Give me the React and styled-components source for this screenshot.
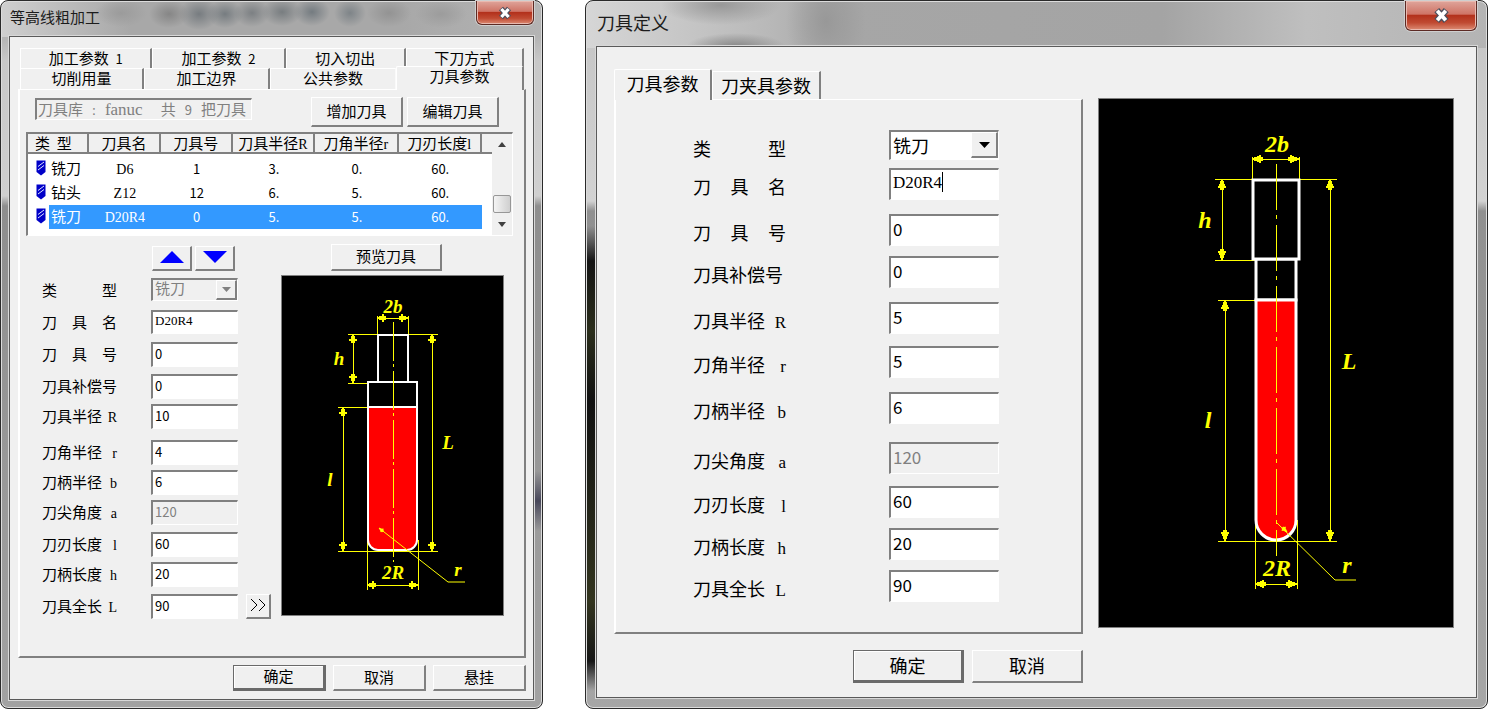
import React, { useState } from "react";
import styled, { createGlobalStyle, css } from "styled-components";

const GlobalStyle = createGlobalStyle`
  * {
    box-sizing: border-box;
  }
  body {
    margin: 0;
    background: #fff;
    color: #000;
    font-family: "Noto Sans CJK SC", sans-serif;
  }
  button, input, select {
    font-family: inherit;
    color: inherit;
    margin: 0;
  }
`;

const raised = css`
  border-style: solid;
  border-width: 1px 2px 2px 1px;
  border-color: #fff #808080 #808080 #fff;
`;

const sunken = css`
  border-style: solid;
  border-width: 2px 1px 1px 2px;
  border-color: #808080 #fff #fff #808080;
`;

const Desktop = styled.main`
  display: grid;
  grid-template-columns: 543fr 903fr;
  gap: 42px;
  min-height: 100vh;
`;

const grayFrame = css`
  background:
    radial-gradient(ellipse 26px 14px at 120px 12px, #9b9b9b, transparent),
    radial-gradient(ellipse 20px 14px at 168px 13px, #868686, transparent),
    radial-gradient(ellipse 20px 16px at 198px 13px, #777c80, transparent),
    radial-gradient(ellipse 18px 14px at 224px 13px, #767c80, transparent),
    radial-gradient(ellipse 18px 14px at 251px 12px, #7c8083, transparent),
    radial-gradient(ellipse 20px 14px at 281px 11px, #787d80, transparent),
    radial-gradient(ellipse 18px 14px at 311px 11px, #747b80, transparent),
    radial-gradient(ellipse 16px 14px at 349px 12px, #7e8488, transparent),
    radial-gradient(ellipse 22px 14px at 388px 12px, #939393, transparent),
    radial-gradient(ellipse 26px 14px at 440px 13px, #9c9c9c, transparent),
    linear-gradient(180deg, transparent 470px, #47475a 500px, transparent 530px) right / 9px 100% no-repeat,
    linear-gradient(90deg, #cfcfcf, #a8a8a8 130px, #a8a8a8 400px, #b4b4b4) top / 100% 36px no-repeat,
    linear-gradient(180deg, #c4c4c4 0, #b4b4b4 36px, #c8c8c8 60px, #cfcfcf 195px, #8e8e8e 205px, #a2a2a2 100%);
`;

const darkFrame = css`
  background:
    linear-gradient(180deg, transparent 225px, #141414 260px, #2b2e1c 330px, #111 400px, #33351f 600px, #161616 660px, transparent 690px) left / 11px 100% no-repeat,
    radial-gradient(ellipse 50px 14px at 150px 46px, #858585, transparent),
    radial-gradient(ellipse 60px 20px at 135px 4px, #989898, transparent),
    radial-gradient(ellipse 40px 60px at 240px 20px, #989898, transparent),
    linear-gradient(90deg, #d6d6d6, #b9b9b9 180px, #a6a6a6 260px, #a4a4a4 64%, #bfbfbf 80%, #b4b4b4) top / 100% 47px no-repeat,
    linear-gradient(180deg, #c4c4c4 0, #d2d2d2 200px, #909090 210px, #a6a6a6 100%);
`;

const Window = styled.section`
  display: flex;
  flex-direction: column;
  min-width: 0;
  padding: 0 ${(p) => (p.$large ? "10px 10px" : "8px 8px")};
  border: 1px solid #2a2a2a;
  border-radius: 8px;
  box-shadow: inset 0 0 0 1px #dcdcdc;
  font-size: ${(p) => (p.$large ? 18 : 15)}px;
  line-height: ${(p) => (p.$large ? 24 : 20)}px;
  ${(p) => (p.$large ? darkFrame : grayFrame)}
`;

const TitleBar = styled.header`
  display: flex;
  justify-content: space-between;
  align-items: flex-start;
  height: ${(p) => (p.$large ? 45 : 35)}px;
`;

const Title = styled.h1`
  margin: 0;
  padding-top: ${(p) => (p.$large ? 9 : 6)}px;
  padding-left: 1px;
  font-size: inherit;
  line-height: inherit;
  font-weight: 400;
  color: #1c1c1c;
`;

const CloseButton = styled.button`
  display: flex;
  align-items: center;
  justify-content: center;
  width: ${(p) => (p.$large ? 72 : 58)}px;
  height: ${(p) => (p.$large ? 30 : 24)}px;
  padding: 0;
  border: 1px solid #5c2a24;
  border-top: 0;
  border-radius: 0 0 6px 6px;
  background: linear-gradient(180deg, #dfa59b 0, #cf7466 45%, #b3311c 50%, #c04a32 75%, #dd8c74 100%);
  box-shadow: inset 0 0 0 1px #e9b9af, 0 0 0 1px #cfcfcf;
`;

const Client = styled.div`
  flex: 1;
  display: flex;
  flex-direction: column;
  padding: 11px 7px 7px 8px;
  border: 1px solid #5a5a5a;
  background: #f0f0f0;
  box-shadow: 0 0 0 1px #d8d8d8;
`;

const TabRow = styled.div`
  display: grid;
  grid-template-columns: ${(p) => p.$columns};
  height: ${(p) => p.$height}px;
  padding: 0 ${(p) => (p.$large ? 0 : 2)}px;
  line-height: ${(p) => (p.$large ? 24 : 18)}px;
`;

const Tab = styled.button`
  padding: 0 0 2px;
  border: 0;
  border-top: 1px solid #fff;
  border-left: 1px solid #fff;
  border-right: ${(p) => (p.$edge ? "2px solid #808080" : "1px solid #fafafa")};
  background: #f0f0f0;
  font-size: inherit;
  line-height: inherit;
  ${(p) =>
    p.$active &&
    css`
      z-index: 1;
      margin-top: -2px;
      margin-bottom: -1px;
      padding-bottom: 5px;
      border-radius: 2px 2px 0 0;
    `}
`;

const Panel = styled.div`
  border-style: solid;
  border-width: 1px 2px 2px;
  border-color: #fff #808080 #808080 #fff;
`;

const PushButton = styled.button`
  ${raised}
  display: flex;
  align-items: center;
  justify-content: center;
  width: ${(p) => p.$width}px;
  height: ${(p) => p.$height}px;
  padding: 0 0 2px;
  background: #f0f0f0;
  font-size: inherit;
  line-height: inherit;
  ${(p) =>
    p.$default &&
    css`
      border-width: 1px 3px 3px 1px;
      border-color: #6a6a6a;
      box-shadow: inset 1px 1px 0 #fff;
    `}
`;

const Toolbar = styled.div`
  display: flex;
  justify-content: space-between;
  align-items: flex-start;
  padding: 7px 25px 0 15px;
`;

const ButtonPair = styled.div`
  display: flex;
  gap: 4px;
`;

const LibraryInfo = styled.output`
  ${sunken}
  display: flex;
  align-items: baseline;
  gap: 9px;
  width: 217px;
  height: 22px;
  margin-top: 1px;
  padding-left: 1px;
  color: #808080;
  line-height: 18px;
  white-space: nowrap;
`;

const Latin = styled.span`
  font-family: "Liberation Serif", serif;
  font-size: ${(p) => (p.$large ? 17 : 14)}px;
  line-height: 0;
`;

const Digits = styled.span`
  font-size: 13px;
  line-height: 0;
`;

const ListView = styled.div`
  display: flex;
  justify-content: space-between;
  margin: 5px 11px 0 6px;
  ${sunken}
  background: #fff;
`;

const ToolTable = styled.table`
  flex: 1;
  table-layout: fixed;
  border-collapse: separate;
  border-spacing: 0;
  margin-bottom: 6px;
  tbody::before {
    content: "";
    display: block;
    height: 3px;
  }
`;

const HeadCell = styled.th`
  width: ${(p) => p.$width}px;
  height: 20px;
  padding: 0;
  border-right: 2px solid #808080;
  border-bottom: 2px solid #808080;
  background: #f0f0f0;
  font-weight: 400;
  line-height: 18px;
  white-space: nowrap;
`;

const TypeHeadCell = styled(HeadCell)`
  padding-left: 7px;
  text-align: left;
`;

const TailCell = styled(HeadCell)`
  border-right: 0;
`;

const Cell = styled.td`
  height: 24px;
  padding: 0 0 2px;
  text-align: center;
  line-height: 18px;
`;

const TypeCell = styled(Cell)`
  padding-left: 2px;
  text-align: left;
`;

const ToolRow = styled.tr`
  ${(p) =>
    p.$selected &&
    css`
      color: #fff;
      ${Cell}, ${TypeCell} {
        background: #3399ff;
      }
    `}
`;

const IconCell = styled.td`
  padding: 0 0 2px 8px;
  line-height: 0;
`;

const ScrollBar = styled.div`
  display: flex;
  flex-direction: column;
  justify-content: flex-end;
  align-items: center;
  width: 20px;
  padding: 8px 0;
  background: #f0f0f0;
`;

const ScrollThumb = styled.div`
  width: 18px;
  height: 18px;
  margin: auto 0 9px;
  border: 1px solid #979797;
  border-radius: 2px;
  background: linear-gradient(90deg, #f4f4f4, #cfcfcf);
`;

const PanelBody = styled.div`
  display: grid;
  grid-template-columns: 261px 1fr;
  padding: 8px 20px 38px 0;
`;

const MoveButtons = styled.div`
  display: flex;
  gap: 3px;
  padding: 2px 0 7px 132px;
`;

const PreviewColumn = styled.div`
  display: flex;
  flex-direction: column;
  gap: 4px;
`;

const PreviewHeader = styled.div`
  padding-left: 50px;
`;

const Form = styled.form`
  display: flex;
  flex-direction: column;
  padding: ${(p) => (p.$large ? "30px 0 30px 77px" : "0 0 0 22px")};
`;

const FieldRow = styled.div`
  display: grid;
  grid-template-columns: ${(p) => (p.$large ? "196px 110px" : "109px 95px 25px")};
  height: ${(p) => (p.$large ? 32 : 24)}px;
  margin-top: ${(p) => p.$gap}px;
`;

const FieldLabel = styled.label`
  display: flex;
  justify-content: space-between;
  align-items: baseline;
  width: ${(p) => (p.$large ? 93 : 75)}px;
  padding-top: ${(p) => (p.$large ? 6 : 2)}px;
  white-space: nowrap;
`;

const FieldSlot = styled.div`
  display: grid;
  width: ${(p) => (p.$large ? 110 : 87)}px;
  > * {
    grid-area: 1 / 1;
  }
`;

const TextBox = styled.input`
  ${sunken}
  width: 100%;
  height: 100%;
  padding: 0 2px ${(p) => (p.$large ? 4 : 3)}px;
  background: #fff;
  border-radius: 0;
  outline: 0;
  font-size: ${(p) => (p.$large ? 17 : 13)}px;
  ${(p) =>
    p.$code &&
    css`
      font-family: "Liberation Serif", serif;
    `}
  &:disabled {
    background: #f0f0f0;
    color: #808080;
  }
`;

const Caret = styled.span`
  width: 1px;
  height: 20px;
  margin: 4px 0 0 53px;
  background: #000;
`;

const Select = styled.select`
  ${sunken}
  appearance: none;
  width: 100%;
  height: ${(p) => (p.$large ? 30 : 23)}px;
  padding: 0 0 ${(p) => (p.$large ? 2 : 4)}px 2px;
  border-radius: 0;
  background: #fff;
  outline: 0;
  font-size: ${(p) => (p.$large ? 18 : 15)}px;
  line-height: ${(p) => (p.$large ? 24 : 16)}px;
  &:disabled {
    background: #f0f0f0;
    color: #808080;
    opacity: 1;
  }
`;

const SelectArrow = styled.span`
  ${raised}
  display: flex;
  align-items: center;
  justify-content: center;
  justify-self: end;
  width: ${(p) => (p.$large ? 27 : 21)}px;
  height: ${(p) => (p.$large ? 26 : 20)}px;
  margin: 2px 1px 0 0;
  background: #f0f0f0;
  pointer-events: none;
`;

const DialogButtons = styled.footer`
  display: flex;
  justify-content: flex-end;
  gap: ${(p) => (p.$large ? 8 : 7)}px;
  padding-top: ${(p) => (p.$large ? 16 : 7)}px;
`;

const DefinitionLayout = styled.div`
  flex: 1;
  display: grid;
  grid-template-columns: 469fr 356fr;
  column-gap: 15px;
  padding: 13px 15px 7px 9px;
`;

const DrawingSlot = styled.div`
  padding-top: 27px;
`;

const Drawing = styled.svg`
  display: block;
  width: 100%;
  height: auto;
  border: 1px solid #808080;
  background: #000;
`;

const CloseIcon = ({ size }) => (
  <svg width={size} height={size} viewBox="0 0 16 16">
    <path d="M4 3.5 12 12.5M12 3.5 4 12.5" stroke="#4a4f5c" strokeWidth="5.4" />
    <path d="M4.4 4 11.6 12M11.6 4 4.4 12" stroke="#fff" strokeWidth="3.2" />
  </svg>
);

const Triangle = ({ width, height, color, up }) => (
  <svg width={width} height={height} viewBox="0 0 10 10" preserveAspectRatio="none">
    <path d={up ? "M0 10 5 0 10 10z" : "M0 0H10L5 10z"} fill={color} />
  </svg>
);

const ToolIcon = () => (
  <svg width="10" height="16" viewBox="0 0 10 16">
    <path d="M.5.5H9.500V12L5 15.500 .5 12z" fill="#0000c8" />
    <path d="M2 6.500 8 2M2 10 8 5.500" stroke="#dfe6ff" strokeWidth="1" />
  </svg>
);

const YELLOW = "#ffff00";

const ArrowHead = ({ x, y, angle, size }) => (
  <g transform={`translate(${x} ${y}) rotate(${angle}) scale(${size})`} fill={YELLOW}>
    <path d="M0 -.8 8 -3.500V3.500L0 .8z" />
    <path d="M6 -4H8V-2H10V2H8V4H6z" />
  </g>
);

const Dimension = ({ x1, y1, x2, y2, size }) => {
  const vertical = x1 === x2;
  return (
    <g>
      <line x1={x1} y1={y1} x2={x2} y2={y2} stroke={YELLOW} />
      <ArrowHead x={x1} y={y1} angle={vertical ? 90 : 0} size={size} />
      <ArrowHead x={x2} y={y2} angle={vertical ? 270 : 180} size={size} />
    </g>
  );
};

const smallTool = {
  view: "1 1 221 339",
  center: 112,
  axis: [47, 287, "39 3 3 4"],
  shank: [97, 127, 60, 107],
  body: [87, 136, 107, 132, 275],
  radius: 10,
  top: 59,
  bottom: 276,
  left: 57,
  hLeft: 67,
  right: 157,
  lX: 62,
  hX: 72,
  LX: 151,
  topDim: 43,
  bottomDim: 310,
  leader: "M98 253 167 307H184",
  tip: [98, 253, 38],
  font: 19,
  arrow: 0.9,
  stroke: 2,
  labels: [
    ["2b", 112, 38],
    ["h", 58, 90],
    ["L", 167, 174],
    ["l", 49, 211],
    ["2R", 112, 304],
    ["r", 177, 301],
  ],
};

const largeTool = {
  view: "1 1 354 528",
  center: 178,
  axis: [66, 458, "46 5 4 6"],
  shank: [155, 201, 82, 161],
  body: [158, 198, 161, 202, 442],
  radius: 20,
  top: 81,
  bottom: 443,
  left: 120,
  hLeft: 117,
  right: 239,
  lX: 127,
  hX: 124,
  LX: 232,
  topDim: 61,
  bottomDim: 486,
  leader: "M178 424 237 482H258",
  tip: [189, 434, 225],
  font: 24,
  arrow: 1.1,
  stroke: 3,
  labels: [
    ["2b", 179, 54],
    ["h", 107, 130],
    ["L", 251, 271],
    ["l", 110, 330],
    ["2R", 179, 478],
    ["r", 249, 475],
  ],
};

const ToolDrawing = ({ tool, title }) => {
  const [sx1, sx2, sy1, sy2] = tool.shank;
  const [bx1, bx2, by1, edge, by2] = tool.body;
  const r = tool.radius;
  const cutter = `M${bx1} ${edge}V${by2 - r}A${r} ${r} 0 0 0 ${bx1 + r} ${by2}H${bx2 - r}A${r} ${r} 0 0 0 ${bx2} ${by2 - r}V${edge}z`;
  return (
    <Drawing viewBox={tool.view} role="img" aria-label={title}>
      <g fill="none" stroke={YELLOW} shapeRendering="crispEdges">
        <path d={`M${tool.hLeft} ${tool.top}H${tool.right}`} />
        <path d={`M${tool.hLeft} ${by1 + 1}H${bx1}`} />
        <path d={`M${tool.left} ${edge}H${bx1}`} />
        <path d={`M${tool.left} ${tool.bottom}H${tool.right}`} />
        <path d={`M${sx1 - 1} ${tool.topDim - 2}V${tool.top}M${sx2} ${tool.topDim - 2}V${tool.top}`} />
        <path d={`M${bx1 - 1} ${by2 - r}V${tool.bottomDim + 5}M${bx2 + 1} ${by2 - r}V${tool.bottomDim + 5}`} />
      </g>
      <g stroke="#fff" strokeWidth={tool.stroke}>
        <rect x={bx1} y={by1} width={bx2 - bx1} height={edge - by1} fill="none" />
        <rect x={sx1} y={sy1} width={sx2 - sx1} height={sy2 - sy1} fill="#000" />
        <path d={cutter} fill="#ff0000" />
      </g>
      <path
        d={`M${tool.center} ${tool.axis[0]}V${tool.axis[1]}`}
        fill="none"
        stroke={YELLOW}
        strokeDasharray={tool.axis[2]}
        shapeRendering="crispEdges"
      />
      <g shapeRendering="crispEdges">
        <Dimension x1={sx1 - 1} y1={tool.topDim} x2={sx2} y2={tool.topDim} size={tool.arrow} />
        <Dimension x1={bx1 - 1} y1={tool.bottomDim} x2={bx2 + 1} y2={tool.bottomDim} size={tool.arrow} />
        <Dimension x1={tool.hX} y1={tool.top} x2={tool.hX} y2={by1 + 1} size={tool.arrow} />
        <Dimension x1={tool.lX} y1={edge} x2={tool.lX} y2={tool.bottom} size={tool.arrow} />
        <Dimension x1={tool.LX} y1={tool.top} x2={tool.LX} y2={tool.bottom} size={tool.arrow} />
      </g>
      <path d={tool.leader} fill="none" stroke={YELLOW} />
      <ArrowHead x={tool.tip[0]} y={tool.tip[1]} angle={tool.tip[2]} size={tool.arrow * 0.6} />
      <g
        fill={YELLOW}
        fontFamily="Liberation Serif, serif"
        fontSize={tool.font}
        fontStyle="italic"
        fontWeight="700"
        textAnchor="middle"
      >
        {tool.labels.map(([text, x, y]) => (
          <text key={text} x={x} y={y}>
            {text}
          </text>
        ))}
      </g>
    </Drawing>
  );
};

const fieldList = [
  { id: "type", label: ["类", "型"] },
  { id: "name", label: ["刀", "具", "名"] },
  { id: "number", label: ["刀", "具", "号"] },
  { id: "offset", label: ["刀具补偿号"] },
  { id: "radius", label: ["刀具半径"], symbol: "R" },
  { id: "corner", label: ["刀角半径"], symbol: "r" },
  { id: "shankRadius", label: ["刀柄半径"], symbol: "b" },
  { id: "angle", label: ["刀尖角度"], symbol: "a", disabled: true },
  { id: "edgeLength", label: ["刀刃长度"], symbol: "l" },
  { id: "shankLength", label: ["刀柄长度"], symbol: "h" },
  { id: "total", label: ["刀具全长"], symbol: "L" },
];

const smallGaps = [0, 8, 8, 8, 6, 12, 6, 6, 8, 6, 8];
const largeGaps = [0, 6, 14, 10, 14, 12, 14, 18, 12, 10, 10];

const ToolForm = ({ prefix, initial, large, typeLocked, caret, more }) => {
  const [values, setValues] = useState(initial);
  const gaps = large ? largeGaps : smallGaps;

  const handleChange = (e) => {
    setValues({ ...values, [e.target.name]: e.target.value });
  };

  return (
    <Form $large={large} onSubmit={(e) => e.preventDefault()}>
      {fieldList.map((field, i) => (
        <FieldRow key={field.id} $large={large} $gap={gaps[i]}>
          <FieldLabel $large={large} htmlFor={prefix + field.id}>
            {field.label.map((part) => (
              <span key={part}>{part}</span>
            ))}
            {field.symbol && <Latin $large={large}>{field.symbol}</Latin>}
          </FieldLabel>
          <FieldSlot $large={large}>
            {field.id === "type" ? (
              <>
                <Select
                  id={prefix + field.id}
                  name={field.id}
                  value={values.type}
                  onChange={handleChange}
                  disabled={typeLocked}
                  $large={large}
                >
                  <option>铣刀</option>
                  <option>钻头</option>
                </Select>
                <SelectArrow $large={large}>
                  <Triangle width={large ? 11 : 9} height={large ? 6 : 5} color={typeLocked ? "#808080" : "#000"} />
                </SelectArrow>
              </>
            ) : (
              <TextBox
                id={prefix + field.id}
                name={field.id}
                value={values[field.id]}
                onChange={handleChange}
                disabled={field.disabled}
                autoComplete="off"
                spellCheck={false}
                $large={large}
                $code={field.id === "name"}
              />
            )}
            {caret === field.id && <Caret />}
          </FieldSlot>
          {more && field.id === "total" && (
            <PushButton type="button" $width={25} $height={25}>
              <svg width="16" height="12" viewBox="0 0 16 12" aria-label="更多">
                <path d="M1 0 7 6 1 12M9 0 15 6 9 12" fill="none" stroke="#000" strokeWidth="1" />
              </svg>
            </PushButton>
          )}
        </FieldRow>
      ))}
    </Form>
  );
};

const tools = [
  { type: "铣刀", name: "D6", number: "1", radius: "3.", corner: "0.", length: "60." },
  { type: "钻头", name: "Z12", number: "12", radius: "6.", corner: "5.", length: "60." },
  { type: "铣刀", name: "D20R4", number: "0", radius: "5.", corner: "5.", length: "60." },
];

const ToolList = () => {
  const [selected, setSelected] = useState(2);
  return (
    <ListView>
      <ToolTable>
        <colgroup>
          <col width="21" />
          <col width="40" />
        </colgroup>
        <thead>
          <tr>
            <TypeHeadCell colSpan={2} $width={61}>类&nbsp; 型</TypeHeadCell>
            <HeadCell $width={71}>刀具名</HeadCell>
            <HeadCell $width={72}>刀具号</HeadCell>
            <HeadCell $width={82}>刀具半径<Latin>R</Latin></HeadCell>
            <HeadCell $width={83}>刀角半径<Latin>r</Latin></HeadCell>
            <HeadCell $width={83}>刀刃长度<Latin>l</Latin></HeadCell>
            <TailCell $width={10} />
          </tr>
        </thead>
        <tbody>
          {tools.map((tool, i) => (
            <ToolRow key={tool.name} $selected={i === selected} onClick={() => setSelected(i)}>
              <IconCell>
                <ToolIcon />
              </IconCell>
              <TypeCell>{tool.type}</TypeCell>
              <Cell><Latin>{tool.name}</Latin></Cell>
              <Cell><Digits>{tool.number}</Digits></Cell>
              <Cell><Digits>{tool.radius}</Digits></Cell>
              <Cell><Digits>{tool.corner}</Digits></Cell>
              <Cell><Digits>{tool.length}</Digits></Cell>
            </ToolRow>
          ))}
        </tbody>
      </ToolTable>
      <ScrollBar>
        <Triangle up width={8} height={5} color="#404040" />
        <ScrollThumb />
        <Triangle width={8} height={5} color="#404040" />
      </ScrollBar>
    </ListView>
  );
};

const RoughingDialog = () => (
  <Window>
    <TitleBar>
      <Title>等高线粗加工</Title>
      <CloseButton aria-label="关闭">
        <CloseIcon size={16} />
      </CloseButton>
    </TitleBar>
    <Client>
      <TabRow $columns="132fr 133fr 120fr 118fr" $height={20}>
        <Tab $edge>加工参数&nbsp; <Digits>1</Digits></Tab>
        <Tab $edge>加工参数&nbsp; <Digits>2</Digits></Tab>
        <Tab $edge>切入切出</Tab>
        <Tab $edge>下刀方式</Tab>
      </TabRow>
      <TabRow $columns="124fr 126fr 126fr 128fr" $height={21}>
        <Tab $edge>切削用量</Tab>
        <Tab $edge>加工边界</Tab>
        <Tab>公共参数</Tab>
        <Tab $edge $active>刀具参数</Tab>
      </TabRow>
      <Panel>
        <Toolbar>
          <LibraryInfo>
            <span>刀具库</span>
            <Latin>:</Latin>
            <Latin $large>fanuc</Latin>
            <span />
            <span>共</span>
            <Digits>9</Digits>
            <span>把刀具</span>
          </LibraryInfo>
          <ButtonPair>
            <PushButton $width={92} $height={30}>增加刀具</PushButton>
            <PushButton $width={92} $height={30}>编辑刀具</PushButton>
          </ButtonPair>
        </Toolbar>
        <ToolList />
        <PanelBody>
          <div>
            <MoveButtons>
              <PushButton aria-label="上移" $width={40} $height={25}>
                <Triangle up width={24} height={12} color="#0000ff" />
              </PushButton>
              <PushButton aria-label="下移" $width={40} $height={25}>
                <Triangle width={24} height={12} color="#0000ff" />
              </PushButton>
            </MoveButtons>
            <ToolForm
              prefix="current-"
              typeLocked
              more
              initial={{
                type: "铣刀",
                name: "D20R4",
                number: "0",
                offset: "0",
                radius: "10",
                corner: "4",
                shankRadius: "6",
                angle: "120",
                edgeLength: "60",
                shankLength: "20",
                total: "90",
              }}
            />
          </div>
          <PreviewColumn>
            <PreviewHeader>
              <PushButton $width={111} $height={27}>预览刀具</PushButton>
            </PreviewHeader>
            <ToolDrawing tool={smallTool} title="刀具预览" />
          </PreviewColumn>
        </PanelBody>
      </Panel>
      <DialogButtons>
        <PushButton $default $width={93} $height={26}>确定</PushButton>
        <PushButton $width={93} $height={26}>取消</PushButton>
        <PushButton $width={93} $height={26}>悬挂</PushButton>
      </DialogButtons>
    </Client>
  </Window>
);

const DefinitionDialog = () => (
  <Window $large>
    <TitleBar $large>
      <Title $large>刀具定义</Title>
      <CloseButton $large aria-label="关闭">
        <CloseIcon size={19} />
      </CloseButton>
    </TitleBar>
    <Client>
      <DefinitionLayout>
        <div>
          <TabRow $large $columns="98px 109px" $height={28}>
            <Tab $edge $active>刀具参数</Tab>
            <Tab $edge>刀夹具参数</Tab>
          </TabRow>
          <Panel>
            <ToolForm
              prefix="define-"
              large
              caret="name"
              initial={{
                type: "铣刀",
                name: "D20R4",
                number: "0",
                offset: "0",
                radius: "5",
                corner: "5",
                shankRadius: "6",
                angle: "120",
                edgeLength: "60",
                shankLength: "20",
                total: "90",
              }}
            />
          </Panel>
          <DialogButtons $large>
            <PushButton $default $width={111} $height={33}>确定</PushButton>
            <PushButton $width={111} $height={33}>取消</PushButton>
          </DialogButtons>
        </div>
        <DrawingSlot>
          <ToolDrawing tool={largeTool} title="刀具定义图" />
        </DrawingSlot>
      </DefinitionLayout>
    </Client>
  </Window>
);

const App = () => {
  return (
    <>
      <GlobalStyle />
      <Desktop>
        <RoughingDialog />
        <DefinitionDialog />
      </Desktop>
    </>
  );
};

export default App;
